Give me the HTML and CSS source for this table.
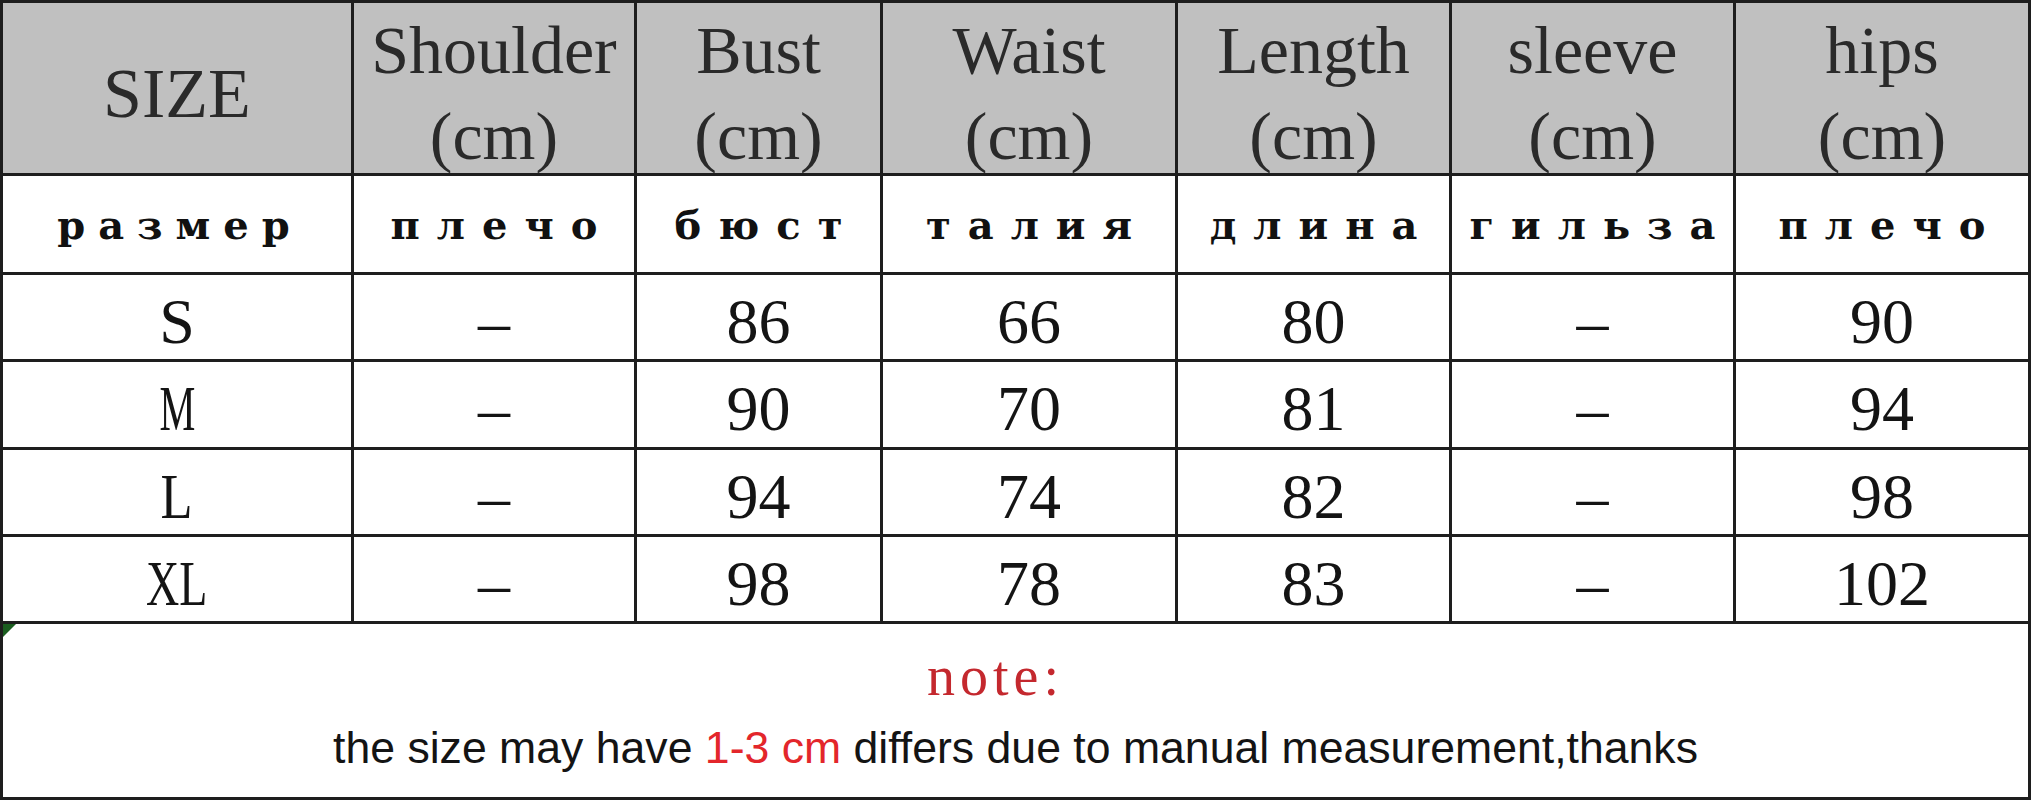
FILE: index.html
```html
<!DOCTYPE html>
<html lang="ru">
<head>
<meta charset="utf-8">
<title>Size chart</title>
<link rel="stylesheet" href="styles.css">
</head>
<body>
<div class="sheet">
  <div class="cell head single">SIZE</div>
  <div class="cell head">Shoulder<br>(cm)</div>
  <div class="cell head">Bust<br>(cm)</div>
  <div class="cell head">Waist<br>(cm)</div>
  <div class="cell head">Length<br>(cm)</div>
  <div class="cell head">sleeve<br>(cm)</div>
  <div class="cell head">hips<br>(cm)</div>

  <div class="cell ru tight">размер</div>
  <div class="cell ru">плечо</div>
  <div class="cell ru">бюст</div>
  <div class="cell ru">талия</div>
  <div class="cell ru">длина</div>
  <div class="cell ru">гильза</div>
  <div class="cell ru">плечо</div>

  <div class="cell num">S</div>
  <div class="cell num"><span class="dash">–</span></div>
  <div class="cell num">86</div>
  <div class="cell num">66</div>
  <div class="cell num">80</div>
  <div class="cell num"><span class="dash">–</span></div>
  <div class="cell num">90</div>

  <div class="cell num"><span class="sz w-m">M</span></div>
  <div class="cell num"><span class="dash">–</span></div>
  <div class="cell num">90</div>
  <div class="cell num">70</div>
  <div class="cell num">81</div>
  <div class="cell num"><span class="dash">–</span></div>
  <div class="cell num">94</div>

  <div class="cell num"><span class="sz w-l">L</span></div>
  <div class="cell num"><span class="dash">–</span></div>
  <div class="cell num">94</div>
  <div class="cell num">74</div>
  <div class="cell num">82</div>
  <div class="cell num"><span class="dash">–</span></div>
  <div class="cell num">98</div>

  <div class="cell num"><span class="sz w-xl">XL</span></div>
  <div class="cell num"><span class="dash">–</span></div>
  <div class="cell num">98</div>
  <div class="cell num">78</div>
  <div class="cell num">83</div>
  <div class="cell num"><span class="dash">–</span></div>
  <div class="cell num">102</div>

  <div class="note">
    <span class="corner"></span>
    <p class="note-title">note:</p>
    <p class="note-text">the size may have <span class="red">1-3 cm</span> differs due to manual measurement,thanks</p>
  </div>
</div>
</body>
</html>
```

FILE: styles.css
```css
html, body {
  margin: 0;
  padding: 0;
  background: #ffffff;
}

.sheet {
  width: 2031px;
  height: 800px;
  box-sizing: border-box;
  border: 3px solid #1e1e1e;
  background: #1e1e1e;
  display: grid;
  grid-template-columns: 348px 280px 243px 292px 271px 281px 292px;
  grid-template-rows: 170px 96px 84px 85px 84px 84px 173px;
  gap: 3px;
}

.cell {
  background: #ffffff;
  display: flex;
  align-items: center;
  justify-content: center;
  text-align: center;
  color: #141414;
  white-space: nowrap;
}

.head {
  background: #c0c0c0;
  font-family: "Liberation Serif", "Times New Roman", serif;
  font-size: 68px;
  line-height: 86px;
  color: #2a2a2a;
  padding-top: 10px;
  box-sizing: border-box;
}

.head.single {
  padding-top: 12px;
  font-size: 70px;
}

.ru {
  font-family: "DejaVu Serif", "Liberation Serif", serif;
  font-weight: bold;
  font-size: 40px;
  letter-spacing: 17px;
  padding-left: 17px;
  box-sizing: border-box;
  color: #111111;
}

.ru.tight {
  letter-spacing: 13px;
  padding-left: 6px;
}

.num {
  font-family: "Liberation Serif", "Times New Roman", serif;
  font-size: 64px;
  padding-top: 9px;
  box-sizing: border-box;
  color: #141414;
}

.dash {
  display: inline-block;
  vertical-align: 0.1em;
}

.sz {
  display: inline-block;
}

.w-m { transform: scaleX(0.63); }
.w-l { transform: scaleX(0.82); }
.w-xl { transform: scaleX(0.72); }

.note {
  grid-column: 1 / -1;
  background: #ffffff;
  position: relative;
  text-align: center;
}

.corner {
  position: absolute;
  left: 0;
  top: 0;
  width: 0;
  height: 0;
  border-top: 13px solid #1b5e20;
  border-right: 13px solid transparent;
}

.note-title {
  margin: 0;
  padding: 24px 40px 0 0;
  font-family: "Liberation Serif", "Times New Roman", serif;
  font-size: 56px;
  line-height: 56px;
  letter-spacing: 5px;
  color: #c4282e;
}

.note-text {
  margin: 22px 0 0 0;
  font-family: "Liberation Sans", Arial, sans-serif;
  font-size: 44.6px;
  line-height: 44px;
  color: #141414;
}

.red {
  color: #e3262b;
}
```
